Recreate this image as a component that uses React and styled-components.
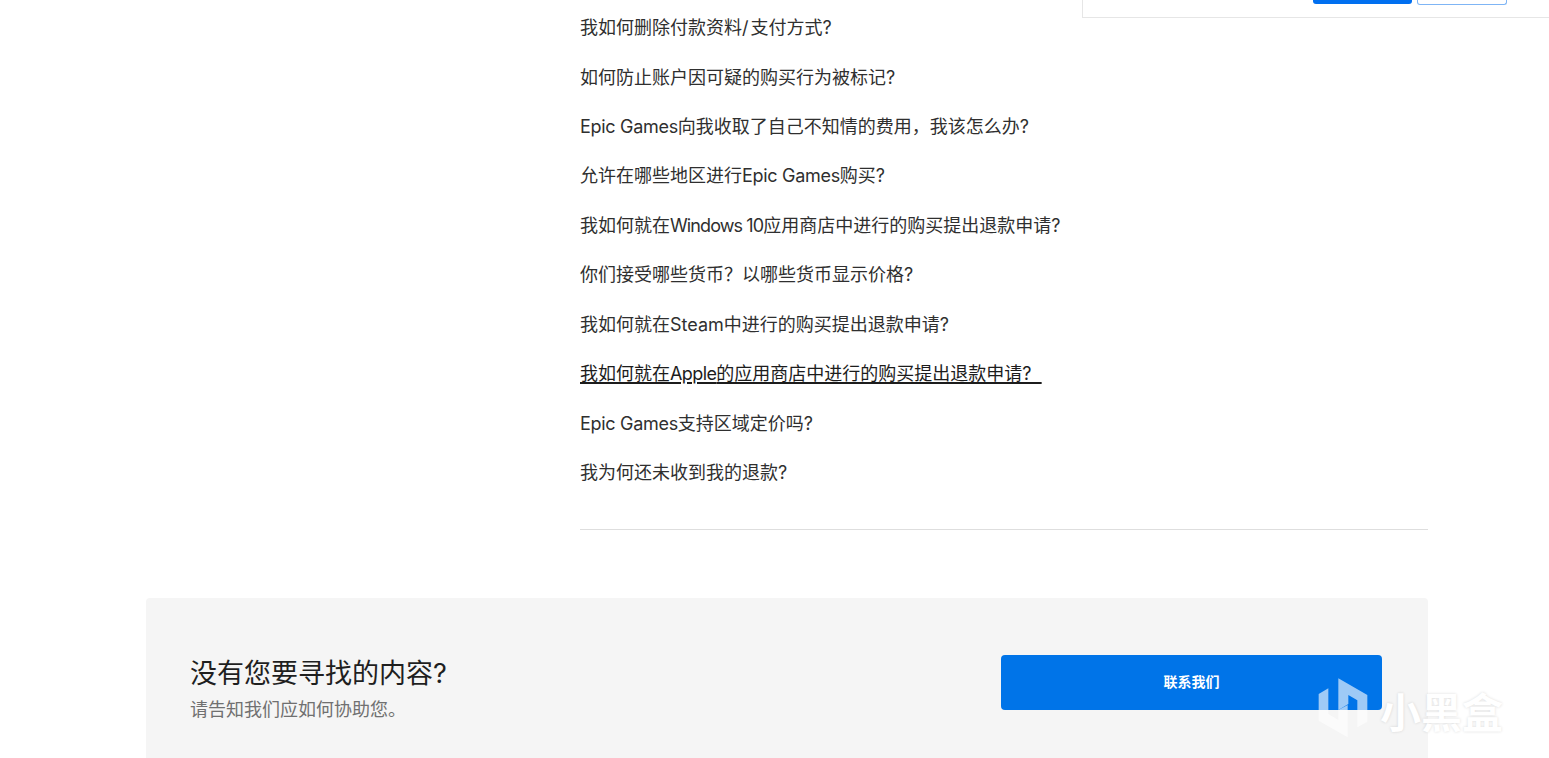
import styled, { createGlobalStyle } from 'styled-components';

const Tight = styled.span`
  letter-spacing: ${(p) => p.$amount || '-0.3px'};
`;

const questions = [
  <>我如何删除付款资料<Tight $amount="2px">/</Tight>支付方式?</>,
  '如何防止账户因可疑的购买行为被标记?',
  <><Tight>Epic Games</Tight>向我收取了自己不知情的费用{'\uFF0C'}我该怎么办?</>,
  <>允许在哪些地区进行<Tight>Epic Games</Tight>购买?</>,
  <>我如何就在<Tight $amount="-0.9px">Windows 10</Tight>应用商店中进行的购买提出退款申请?</>,
  '你们接受哪些货币\uFF1F以哪些货币显示价格?',
  '我如何就在Steam中进行的购买提出退款申请?',
  <>我如何就在<Tight $amount="-0.6px">Apple</Tight>的应用商店中进行的购买提出退款申请?&nbsp;&nbsp;</>,
  <><Tight>Epic Games</Tight>支持区域定价吗?</>,
  '我为何还未收到我的退款?',
];

function App() {
  return (
    <Page>
      <GlobalStyle />
      <CookieBar>
        <CookieAccept />
        <CookieDecline />
      </CookieBar>
      <QuestionColumn>
        {questions.map((q, i) => (
          <QuestionRow key={i} $active={i === 7}>{q}</QuestionRow>
        ))}
        <Divider />
      </QuestionColumn>
      <ContactCard>
        <ContactText>
          <ContactTitle>没有您要寻找的内容?</ContactTitle>
          <ContactSub>请告知我们应如何协助您。</ContactSub>
        </ContactText>
        <ContactButton>联系我们</ContactButton>
      </ContactCard>
      <WatermarkLogo width="70" height="75" viewBox="0 0 210 225" fill="currentColor">
        <path d="M85 10 L172 60 V140 L142 157 V76 L115 60 V87 L85 105 Z" />
        <path d="M26 57 L55 40 V117 L85 135 V105 L113 90 V187 L26 137 Z" />
      </WatermarkLogo>
      <WatermarkText>小黑盒</WatermarkText>
    </Page>
  );
}

const GlobalStyle = createGlobalStyle`
  html, body {
    margin: 0;
    padding: 0;
    height: 100%;
    overflow: hidden;
    background: #fff;
  }
  body {
    font-family: Inter, "Noto Sans CJK SC", sans-serif;
  }
`;

const Page = styled.div`
  position: relative;
  height: 758px;
  overflow: hidden;
  padding-top: 3.1px;
  box-sizing: border-box;
`;

const CookieBar = styled.div`
  position: absolute;
  top: 0;
  right: 0;
  width: 467px;
  height: 18px;
  box-sizing: border-box;
  background: #fff;
  border-left: 1px solid #e6e6e6;
  border-bottom: 1px solid #e6e6e6;
  display: flex;
  justify-content: flex-end;
  gap: 5px;
  padding-right: 42px;
`;

const CookieAccept = styled.div`
  width: 99px;
  height: 4px;
  background: #006ff0;
  border-radius: 0 0 3px 3px;
`;

const CookieDecline = styled.div`
  width: 90px;
  height: 5px;
  box-sizing: border-box;
  border: 1px solid #7fb5f5;
  border-top: none;
  border-radius: 0 0 3px 3px;
`;

const QuestionColumn = styled.div`
  width: 848px;
  margin-left: 580px;
`;

const QuestionRow = styled.div`
  height: 49.45px;
  line-height: 49px;
  font-size: 18px;
  color: ${(p) => (p.$active ? '#1c1c1c' : '#2f2f2f')};
  white-space: pre;
  text-decoration: ${(p) => (p.$active ? 'underline' : 'none')};
  text-decoration-thickness: 2px;
  text-underline-offset: 2px;
`;

const Divider = styled.div`
  height: 1px;
  background: #dedede;
  margin-top: 31.4px;
`;

const ContactCard = styled.div`
  width: 1282px;
  height: 180px;
  margin: 68px 0 0 146px;
  padding: 57px 46px 0 44px;
  box-sizing: border-box;
  background: #f5f5f5;
  border-radius: 4px;
  display: flex;
  justify-content: space-between;
  align-items: flex-start;
`;

const ContactText = styled.div`
  display: flex;
  flex-direction: column;
  padding-top: 2px;
`;

const ContactTitle = styled.div`
  font-size: 27px;
  line-height: 34px;
  color: #1f1f1f;
`;

const ContactSub = styled.div`
  font-size: 18px;
  line-height: 26px;
  margin-top: 6px;
  color: #707070;
`;

const ContactButton = styled.div`
  width: 381px;
  height: 55px;
  padding-bottom: 3px;
  box-sizing: border-box;
  background: #0074e8;
  border-radius: 4px;
  color: #fff;
  font-size: 14px;
  font-weight: 700;
  display: flex;
  align-items: center;
  justify-content: center;
`;

const WatermarkLogo = styled.svg`
  position: absolute;
  left: 1310px;
  top: 675px;
  color: rgba(255, 255, 255, 0.62);
`;

const WatermarkText = styled.div`
  position: absolute;
  left: 1380px;
  top: 688px;
  font-size: 41px;
  line-height: 50px;
  font-weight: 700;
  color: #fff;
  text-shadow: 0 0 3px rgba(0, 0, 0, 0.14);
`;

export default App;
